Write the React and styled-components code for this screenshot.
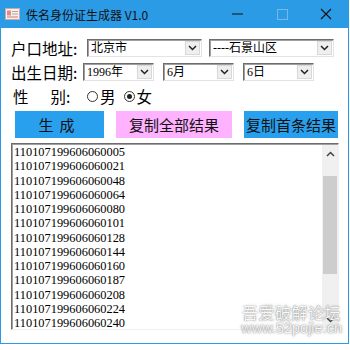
import React from "react";
import styled, { createGlobalStyle } from "styled-components";

const ids = [
  "110107199606060005",
  "110107199606060021",
  "110107199606060048",
  "110107199606060064",
  "110107199606060080",
  "110107199606060101",
  "110107199606060128",
  "110107199606060144",
  "110107199606060160",
  "110107199606060187",
  "110107199606060208",
  "110107199606060224",
  "110107199606060240",
];

const Global = createGlobalStyle`
  body {
    margin: 0;
    background: #ffffff;
    font-family: "Noto Sans CJK SC", "Liberation Sans", sans-serif;
  }
`;

const Window = styled.div`
  width: 349px;
  height: 344px;
  box-sizing: border-box;
  border: 1px solid #2b9be6;
  border-top: none;
  background: #fff;
  position: relative;
  overflow: hidden;
`;

const TitleBar = styled.div`
  height: 28px;
  background: #2b9be6;
  display: flex;
  align-items: center;
  padding-left: 4px;
  color: #111;
  font-size: 12px;
`;

const Title = styled.span`
  margin-left: 6px;
  flex: 1;
  font-family: "Noto Sans CJK SC", sans-serif;
`;

const Ctrl = styled.div`
  width: 44px;
  height: 28px;
  display: flex;
  align-items: center;
  justify-content: center;
`;

const Body = styled.div`
  padding: 11px 0 0 10px;
  display: flex;
  flex-direction: column;
`;

const Row = styled.div`
  display: flex;
  align-items: center;
  height: 18px;
  margin-bottom: ${(p) => p.$mb || 6}px;
`;

const Label = styled.div`
  width: ${(p) => p.$w}px;
  font-size: 15.5px;
  color: #000;
  white-space: nowrap;
  display: flex;
`;

const Gap = styled.span`
  display: inline-block;
  width: ${(p) => p.$w}px;
`;

const Combo = styled.div`
  width: ${(p) => p.$w}px;
  height: 18px;
  box-sizing: border-box;
  margin-right: ${(p) => p.$mr || 0}px;
  border: 1px solid;
  border-color: #6d6d6d #e3e3e3 #e3e3e3 #6d6d6d;
  box-shadow: inset 1px 1px 0 #a0a0a0;
  display: flex;
  align-items: stretch;
  background: #fff;
`;

const ComboText = styled.div`
  flex: 1;
  font-size: 12px;
  line-height: 16px;
  padding-left: 3px;
  color: #000;
  font-family: "Liberation Serif", "Noto Sans CJK SC", serif;
`;

const DropBtn = styled.div`
  width: 15px;
  margin: 1px 1px 1px 0;
  background: #efefef;
  border: 1px solid #d8d8d8;
  box-sizing: border-box;
  display: flex;
  align-items: center;
  justify-content: center;
`;

const Radio = styled.div`
  display: flex;
  align-items: center;
  margin-right: 8px;
  font-size: 15.5px;
`;

const Circle = styled.span`
  width: 9px;
  height: 9px;
  border: 1px solid #333;
  border-radius: 50%;
  margin-right: 2px;
  display: inline-flex;
  align-items: center;
  justify-content: center;
  &::after {
    content: "";
    width: 5px;
    height: 5px;
    border-radius: 50%;
    background: ${(p) => (p.$on ? "#222" : "transparent")};
  }
`;

const Buttons = styled.div`
  display: flex;
  margin: 0 0 5px 4px;
`;

const Btn = styled.div`
  width: ${(p) => p.$w}px;
  height: 27px;
  margin-right: ${(p) => p.$mr}px;
  background: ${(p) => p.$bg};
  color: #111;
  font-size: 15px;
  display: flex;
  align-items: center;
  justify-content: center;
  letter-spacing: ${(p) => p.$ls || 0}px;
`;

const Output = styled.div`
  width: 328px;
  height: 187px;
  box-sizing: border-box;
  border: 1px solid;
  border-color: #6d6d6d #f0f0f0 #f0f0f0 #6d6d6d;
  box-shadow: inset 1px 1px 0 #a0a0a0;
  display: flex;
`;

const Lines = styled.div`
  flex: 1;
  padding: 1px 0 0 2px;
  font-family: "Liberation Serif", serif;
  font-size: 12.4px;
  line-height: 14.25px;
  color: #000;
  overflow: hidden;
`;

const ScrollBar = styled.div`
  width: 16px;
  background: #f0f0f0;
  display: flex;
  flex-direction: column;
  margin: 1px 0 1px 0;
`;

const Arrow = styled.div`
  height: 17px;
  display: flex;
  align-items: center;
  justify-content: center;
`;

const Track = styled.div`
  flex: 1;
  padding: 14px 1px 37px;
  display: flex;
`;

const Thumb = styled.div`
  flex: 1;
  background: #cdcdcd;
`;

const Watermark = styled.div`
  position: absolute;
  right: 6px;
  bottom: 7px;
  color: rgba(255, 255, 255, 0.95);
  text-shadow: 0 0 1px rgba(90, 90, 90, 0.8), 0 0 3px rgba(120, 120, 120, 0.6);
  text-align: center;
  pointer-events: none;
`;

const WmBig = styled.div`
  font-size: 16px;
  line-height: 18px;
  letter-spacing: 0.5px;
`;

const WmSmall = styled.div`
  font-size: 14.5px;
  line-height: 15px;
  font-family: "Liberation Sans", sans-serif;
`;

const Chevron = () => (
  <svg width="9" height="6" viewBox="0 0 9 6">
    <path d="M1 1 L4.5 4.5 L8 1" fill="none" stroke="#222" strokeWidth="1.5" />
  </svg>
);

const Select = ({ w, mr, children }) => (
  <Combo $w={w} $mr={mr}>
    <ComboText>{children}</ComboText>
    <DropBtn>
      <Chevron />
    </DropBtn>
  </Combo>
);

const AppIcon = () => (
  <svg width="15" height="12" viewBox="0 0 15 12">
    <rect x="0.5" y="0.5" width="14" height="11" fill="#f6f0ee" stroke="#c9a9a3" />
    <rect x="2" y="2.5" width="4" height="5" fill="#e58b84" />
    <rect x="7" y="3" width="6" height="1" fill="#b7a2a0" />
    <rect x="7" y="5.5" width="6" height="1" fill="#b7a2a0" />
    <rect x="2" y="8.5" width="11" height="1" fill="#d07a74" />
  </svg>
);

export default function App() {
  return (
    <>
      <Global />
      <Window>
        <TitleBar>
          <AppIcon />
          <Title>佚名身份证生成器 V1.0</Title>
          <Ctrl>
            <svg width="12" height="2">
              <rect width="11" height="1" y="0.5" fill="#111" />
            </svg>
          </Ctrl>
          <Ctrl>
            <svg width="11" height="11">
              <rect x="0.5" y="0.5" width="10" height="10" fill="none" stroke="#78b8e8" />
            </svg>
          </Ctrl>
          <Ctrl>
            <svg width="12" height="12">
              <path d="M1 1 L11 11 M11 1 L1 11" stroke="#111" strokeWidth="1.1" />
            </svg>
          </Ctrl>
        </TitleBar>
        <Body>
          <Row>
            <Label $w={76}>户口地址:</Label>
            <Select w={115} mr={7}>北京市</Select>
            <Select w={125}>----石景山区</Select>
          </Row>
          <Row>
            <Label $w={72}>出生日期:</Label>
            <Select w={71} mr={9}>1996年</Select>
            <Select w={71} mr={9}>6月</Select>
            <Select w={71}>6日</Select>
          </Row>
          <Row $mb={6}>
            <Label $w={76}>
              <Gap $w={2} />性<Gap $w={22} />别:
            </Label>
            <Radio>
              <Circle />男
            </Radio>
            <Radio>
              <Circle $on />女
            </Radio>
          </Row>
          <Buttons>
            <Btn $w={89} $mr={12} $bg="#28a0ee" $ls={6}>
              生成
            </Btn>
            <Btn $w={116} $mr={12} $bg="#ffb2ff">
              复制全部结果
            </Btn>
            <Btn $w={94} $mr={0} $bg="#28a0ee">
              复制首条结果
            </Btn>
          </Buttons>
          <Output>
            <Lines>
              {ids.map((id) => (
                <div key={id}>{id}</div>
              ))}
            </Lines>
            <ScrollBar>
              <Arrow>
                <svg width="9" height="6" viewBox="0 0 9 6">
                  <path d="M1 5 L4.5 1.5 L8 5" fill="none" stroke="#444" strokeWidth="1.5" />
                </svg>
              </Arrow>
              <Track>
                <Thumb />
              </Track>
              <Arrow>
                <svg width="9" height="6" viewBox="0 0 9 6">
                  <path d="M1 1 L4.5 4.5 L8 1" fill="none" stroke="#444" strokeWidth="1.5" />
                </svg>
              </Arrow>
            </ScrollBar>
          </Output>
        </Body>
        <Watermark>
          <WmBig>吾爱破解论坛</WmBig>
          <WmSmall>www.52pojie.cn</WmSmall>
        </Watermark>
      </Window>
    </>
  );
}
